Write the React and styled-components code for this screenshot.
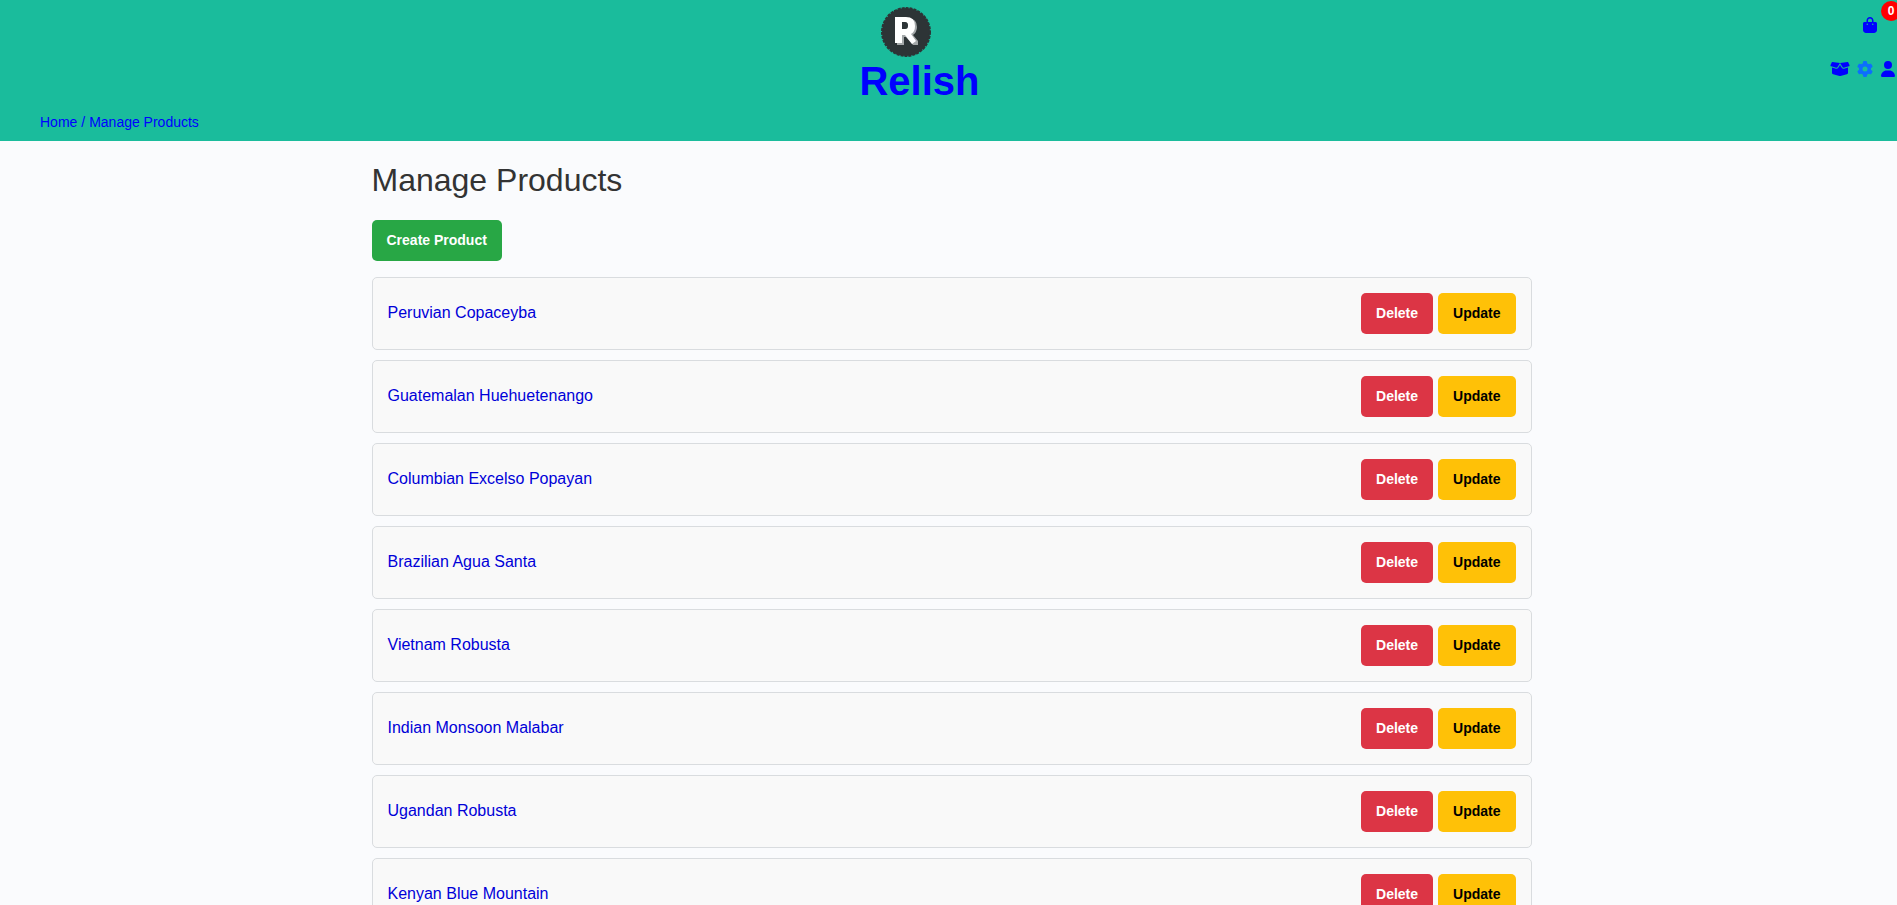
import React from "react";
import styled, { createGlobalStyle } from "styled-components";
import { FaBagShopping, FaBoxOpen, FaGear, FaUser } from "react-icons/fa6";

const GlobalStyle = createGlobalStyle`
  * { box-sizing: border-box; }
  body {
    margin: 0;
    overflow-x: hidden;
    background: #fafbfd;
    color: #333;
    font-family: "Liberation Sans", Arial, sans-serif;
    font-size: 16px;
  }
  a { text-decoration: none; }
`;

const Header = styled.header`
  display: flex;
  flex-direction: column;
  background: #1abc9c;
`;

const TopBar = styled.div`
  display: grid;
  grid-template-columns: 1fr auto 1fr;
  height: 112px;
  overflow: hidden;
`;

const Brand = styled.a`
  grid-column: 2;
  display: flex;
  flex-direction: column;
  align-items: center;
  padding-top: 7px;
  margin-right: 58px;
  color: #00f;
`;

const Logo = styled.svg`
  width: 50px;
  height: 50px;
  margin-right: 26px;
`;

const BrandName = styled.span`
  font-size: 40px;
  font-weight: bold;
  line-height: 48px;
`;

const Tools = styled.nav`
  justify-self: end;
  display: flex;
  flex-direction: column;
  align-items: flex-end;
  gap: 26px;
  padding-top: 17px;
`;

const Cart = styled.a`
  position: relative;
  display: flex;
  margin-right: 19px;
  color: #00f;
`;

const Badge = styled.span`
  position: absolute;
  top: -16px;
  right: -23px;
  width: 20px;
  height: 20px;
  border-radius: 50%;
  background: #f00;
  color: #fff;
  font-size: 12px;
  font-weight: bold;
  line-height: 20px;
  text-align: center;
`;

const ToolLinks = styled.div`
  display: flex;
  gap: 7px;
  align-items: center;
  margin-right: 1px;
`;

const ToolLink = styled.a`
  display: flex;
  color: ${(p) => p.$color || "#00f"};
`;

const Breadcrumb = styled.nav`
  display: flex;
  gap: 4px;
  height: 29px;
  padding-left: 40px;
  color: #00f;
  font-size: 14px;
  line-height: 20px;
  a { color: inherit; }
`;

const Main = styled.main`
  width: 100%;
  max-width: 1200px;
  margin: 0 auto;
  padding: 20px 17px 20px 23px;
`;

const Title = styled.h1`
  margin: 0 0 20px;
  font-size: 32px;
  font-weight: normal;
  line-height: 39px;
`;

const variants = {
  create: ["#28a745", "#fff"],
  remove: ["#dc3545", "#fff"],
  update: ["#ffc107", "#000"],
};

const Button = styled.button`
  height: 41px;
  padding: 0 15px 1px;
  border: 0;
  border-radius: 5px;
  background: ${(p) => variants[p.$variant][0]};
  color: ${(p) => variants[p.$variant][1]};
  font-family: inherit;
  font-size: 14px;
  font-weight: bold;
  cursor: pointer;
`;

const ProductList = styled.ul`
  display: flex;
  flex-direction: column;
  gap: 10px;
  margin: 16px 0 0;
  padding: 0;
  list-style: none;
`;

const ProductRow = styled.li`
  display: flex;
  align-items: center;
  justify-content: space-between;
  padding: 15px;
  border: 1px solid #d9dcdf;
  border-radius: 5px;
  background: #f9f9f9;
`;

const ProductLink = styled.a`
  padding-bottom: 2px;
  color: #0000d8;
  line-height: 20px;
`;

const Actions = styled.div`
  display: flex;
  gap: 5px;
`;

const products = [
  "Peruvian Copaceyba",
  "Guatemalan Huehuetenango",
  "Columbian Excelso Popayan",
  "Brazilian Agua Santa",
  "Vietnam Robusta",
  "Indian Monsoon Malabar",
  "Ugandan Robusta",
  "Kenyan Blue Mountain",
];

function RelishLogo() {
  return (
    <Logo viewBox="0 0 50 50" aria-hidden="true">
      <circle cx="25" cy="25" r="24" fill="#2d3436" stroke="#2d3436" strokeWidth="2" strokeDasharray="3 1" />
      <path d="M16 12L28 11Q36 12 36 20Q36 25 32 28L37 34V38H32L25 30H23V38H16Z" fill="#a4a8a9" />
      <path
        fillRule="evenodd"
        d="M14 10H25Q34 10 34 19Q34 25 30 27L35 34L31 37L24 28H21V36H14ZM21 15V22H24Q27 22 27 18.500Q27 15 24 15Z"
        fill="#fff"
      />
      <path d="M21 15H24Q27 15 27 18.500Q27 22 24 22H21Z" fill="#2d3436" />
    </Logo>
  );
}

export default function App() {
  return (
    <>
      <GlobalStyle />
      <Header>
        <TopBar>
          <Brand href="#home">
            <RelishLogo />
            <BrandName>Relish</BrandName>
          </Brand>
          <Tools aria-label="Account">
            <Cart href="#cart" aria-label="Cart">
              <FaBagShopping size={16} />
              <Badge>0</Badge>
            </Cart>
            <ToolLinks>
              <ToolLink href="#orders" aria-label="Orders"><FaBoxOpen size={20} /></ToolLink>
              <ToolLink href="#settings" aria-label="Settings" $color="#0d6efd"><FaGear size={16} /></ToolLink>
              <ToolLink href="#profile" aria-label="Profile"><FaUser size={16} /></ToolLink>
            </ToolLinks>
          </Tools>
        </TopBar>
        <Breadcrumb aria-label="Breadcrumb">
          <a href="#home">Home</a>
          <span>/ <a href="#products">Manage Products</a></span>
        </Breadcrumb>
      </Header>
      <Main>
        <Title>Manage Products</Title>
        <Button type="button" $variant="create">Create Product</Button>
        <ProductList>
          {products.map((name) => (
            <ProductRow key={name}>
              <ProductLink href="#product">{name}</ProductLink>
              <Actions>
                <Button type="button" $variant="remove">Delete</Button>
                <Button type="button" $variant="update">Update</Button>
              </Actions>
            </ProductRow>
          ))}
        </ProductList>
      </Main>
    </>
  );
}
